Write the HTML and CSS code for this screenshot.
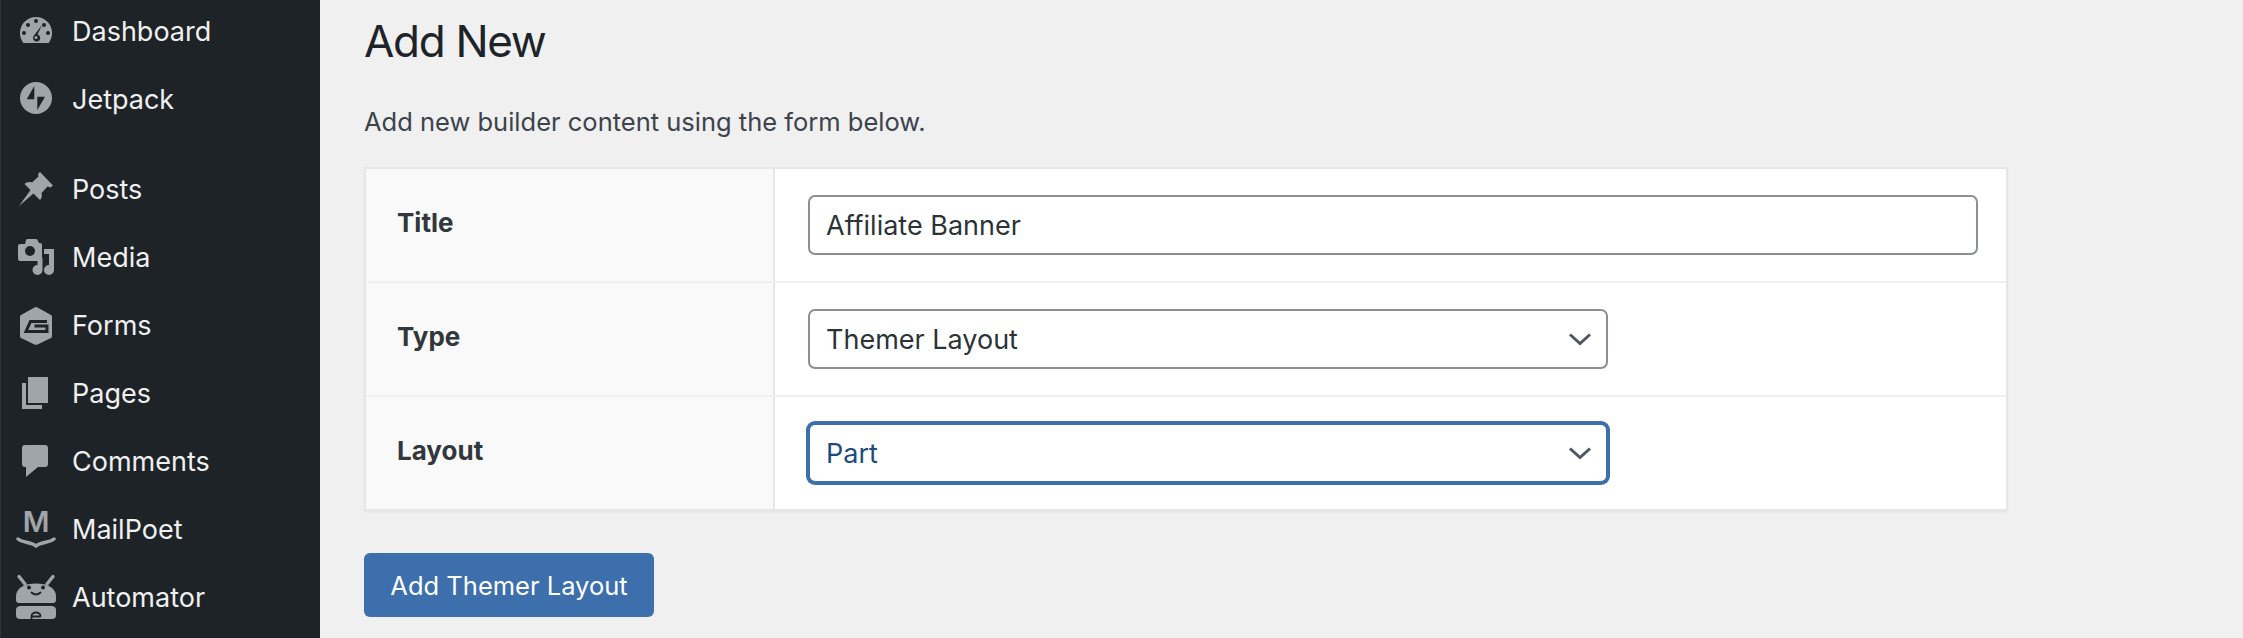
FILE: index.html
```html
<!DOCTYPE html>
<html>
<head>
    <meta charset="utf-8" />
    <title>Add New</title>
    <link rel="stylesheet" href="styles.css">
</head>
<body>
    <nav class="sidebar">
        <a class="menu-item">
            <svg class="menu-icon" viewBox="0 0 40 48">
                <path d="M7.5 36A16 16 0 1 1 32.5 36Z" />
                <g class="cut">
                    <circle cx="8" cy="26" r="2" /><circle cx="12" cy="18" r="2" /><circle cx="20" cy="14" r="2" />
                    <circle cx="28" cy="18" r="2" /><circle cx="32" cy="26" r="2" />
                    <path d="M26 18L21.5 27.5A3.6 3.6 0 1 1 18 28.5Z" />
                </g>
                <circle cx="20" cy="30.5" r="1.5" />
            </svg>
            Dashboard
        </a>
        <a class="menu-item">
            <svg class="menu-icon" viewBox="0 0 40 48">
                <circle cx="20" cy="23" r="16" />
                <path class="cut" d="M10.7 24.3L18.3 11V24.3ZM21.3 21.7H29L21.3 35Z" />
            </svg>
            Jetpack
        </a>
        <a class="menu-item menu-gap">
            <svg class="menu-icon" viewBox="0 0 40 48">
                <path d="M24 7L37 20.5L34.5 22.5L31.5 21.5L25.5 28C26.5 31 25.5 33.5 24 35L17.5 28.5L3 41L14.5 25L8.5 19C10 17.5 13 16.5 16 17.5L22.5 11.5L22 9Z" />
            </svg>
            Posts
        </a>
        <a class="menu-item">
            <svg class="menu-icon" viewBox="0 0 40 48">
                <path d="M4 11H9L10 7Q10.500 6 12 6H20Q21 6 21.500 7L23 10H24Q26 10 26 12V25Q26 28 24 28H4Q2 28 2 25V13Q2 11 4 11Z" />
                <circle class="cut" cx="14" cy="18" r="5" />
                <path d="M28 16H38V37A5 5 0 1 1 33 32V21H28ZM24 25H26.500V37A5 5 0 1 1 21.500 32V28H24Z" />
            </svg>
            Media
        </a>
        <a class="menu-item">
            <svg class="menu-icon" viewBox="0 0 40 48">
                <path d="M18.500 6.500Q20 5.700 21.500 6.500L35 14Q36 14.700 36 16V35Q36 36.300 35 37L21.500 43.500Q20 44.200 18.500 43.500L5 37Q4 36.300 4 35V16Q4 14.700 5 14Z" />
                <path class="cut-line" d="M31 20.500H14.500L10 30.500H31V25H18.500" />
            </svg>
            Forms
        </a>
        <a class="menu-item">
            <svg class="menu-icon" viewBox="0 0 40 48">
                <path d="M12 8H32V34H12ZM6 14H10V36H26V40H6Z" />
            </svg>
            Pages
        </a>
        <a class="menu-item">
            <svg class="menu-icon" viewBox="0 0 40 48">
                <path d="M9 8H29Q32 8 32 11V27Q32 30 29 30H22L10 40V30H9Q6 30 6 27V11Q6 8 9 8Z" />
            </svg>
            Comments
        </a>
        <a class="menu-item">
            <svg class="menu-icon" viewBox="0 0 40 48">
                <text class="mail-m" x="20" y="27" text-anchor="middle">M</text>
                <path class="band" d="M2 34C8 38.500 15 36.500 20 41C25 36.500 32 38.500 38 34" />
            </svg>
            MailPoet
        </a>
        <a class="menu-item">
            <svg class="menu-icon" viewBox="0 0 40 48">
                <path class="antenna" d="M3 3.500L9 11M37 3.500L31 11" />
                <path d="M3 30Q0 30 0 27V23C0 15 9 10.500 20 10.500C31 10.500 40 15 40 23V27Q40 30 37 30Z" />
                <g class="cut"><circle cx="13" cy="14.500" r="2" /><circle cx="27" cy="14.500" r="2" /></g>
                <path class="cut-line thin" d="M15.500 19.500Q20 23.500 24.500 19.500" />
                <path d="M5 33H35Q40 33 40 37V42Q40 46 36 46H4Q0 46 0 42V37Q0 33 5 33Z" />
                <path class="cut-line thin" d="M15.500 46V43A4.500 3.500 0 0 1 24.500 43M16 43.500H24" />
            </svg>
            Automator
        </a>
    </nav>

    <main class="content">
        <h1 class="page-title">Add New</h1>
        <p class="intro">Add new builder content using the form below.</p>

        <form class="card">
            <div class="row">
                <label class="row-label">Title</label>
                <div class="row-field">
                    <input class="control control-wide" type="text" value="Affiliate Banner">
                </div>
            </div>
            <div class="row">
                <label class="row-label">Type</label>
                <div class="row-field">
                    <div class="select-wrap">
                        <select class="control"><option>Themer Layout</option></select>
                        <svg class="chevron" viewBox="0 0 24 14"><path d="M2 2.500L12 11.500L22 2.500" /></svg>
                    </div>
                </div>
            </div>
            <div class="row">
                <label class="row-label">Layout</label>
                <div class="row-field">
                    <div class="select-wrap">
                        <select class="control control-focus"><option>Part</option></select>
                        <svg class="chevron" viewBox="0 0 24 14"><path d="M2 2.500L12 11.500L22 2.500" /></svg>
                    </div>
                </div>
            </div>
        </form>

        <button class="submit" type="button">Add Themer Layout</button>
    </main>
</body>
</html>
```

FILE: styles.css
```css
html, body {
    height: 100%;
}

body {
    margin: 0;
    display: flex;
    overflow: hidden;
    background: #f0f0f1;
    font-family: Inter, "Liberation Sans", sans-serif;
    color: #3c434a;
}

/* sidebar */
.sidebar {
    width: 320px;
    flex: none;
    display: flex;
    flex-direction: column;
    gap: 6px;
    box-sizing: border-box;
    background: #1d2327;
    border-left: 1px solid #2c3338;
}

.menu-item {
    height: 62px;
    flex: none;
    display: flex;
    align-items: center;
    gap: 16px;
    padding-left: 15px;
    font-size: 27px;
    color: #f0f0f1;
}

.menu-gap {
    margin-top: 22px;
}

.menu-icon {
    width: 40px;
    height: 48px;
    flex: none;
    fill: #a0a5aa;
}

.cut {
    fill: #1d2327;
}

.cut-line {
    fill: none;
    stroke: #1d2327;
    stroke-width: 3;
}

.cut-line.thin {
    stroke-width: 1.8;
    stroke-linecap: round;
}

.band {
    fill: none;
    stroke: #a0a5aa;
    stroke-width: 3.4;
    stroke-linecap: round;
}

.antenna {
    fill: none;
    stroke: #a0a5aa;
    stroke-width: 3.4;
    stroke-linecap: round;
}

.mail-m {
    font-size: 29px;
    font-weight: 600;
}

/* main column */
.content {
    flex: 1;
    padding: 0 44px;
}

.page-title {
    margin: 14px 0 0;
    font-size: 44px;
    line-height: 54px;
    font-weight: 400;
    letter-spacing: -1.3px;
    color: #1d2327;
}

.intro {
    margin: 37px 0 0;
    font-size: 25.5px;
    line-height: 34px;
}

.card {
    width: 1644px;
    margin-top: 28px;
    box-sizing: border-box;
    background: #fff;
    border: 2px solid #e6e6e7;
    box-shadow: 0 2px 2px rgba(0, 0, 0, 0.04);
}

.row {
    height: 114px;
    display: flex;
    box-sizing: border-box;
    border-bottom: 2px solid #f0f0f1;
}

.row:last-child {
    height: 112px;
    border-bottom: 0;
}

.row-label {
    width: 409px;
    flex: none;
    box-sizing: border-box;
    padding: 37px 0 0 31px;
    background: #f9f9f9;
    border-right: 2px solid #e5e5e5;
    font-size: 26px;
    line-height: 34px;
    font-weight: 700;
    color: #32373c;
}

.row-field {
    flex: 1;
    display: flex;
    align-items: center;
    padding-left: 33px;
}

.control {
    width: 800px;
    height: 60px;
    box-sizing: border-box;
    padding: 0 16px;
    background: #fff;
    border: 2px solid #8c8f94;
    border-radius: 7px;
    font-family: inherit;
    font-size: 27px;
    color: #2c3338;
    appearance: none;
    outline: 0;
}

.control-wide {
    width: 1170px;
}

.control-focus {
    border-color: #3c6fac;
    box-shadow: 0 0 0 2px #3c6fac;
    color: #1f4a7c;
}

.select-wrap {
    position: relative;
    display: flex;
}

.chevron {
    position: absolute;
    top: 50%;
    right: 16px;
    width: 24px;
    height: 14px;
    margin-top: -7px;
    fill: none;
    stroke: #50575e;
    stroke-width: 3;
}

.submit {
    display: block;
    width: 290px;
    height: 64px;
    margin-top: 42px;
    padding: 0;
    background: #3c6fac;
    border: 0;
    border-radius: 6px;
    font-family: inherit;
    font-size: 25.5px;
    color: #fff;
}
```
